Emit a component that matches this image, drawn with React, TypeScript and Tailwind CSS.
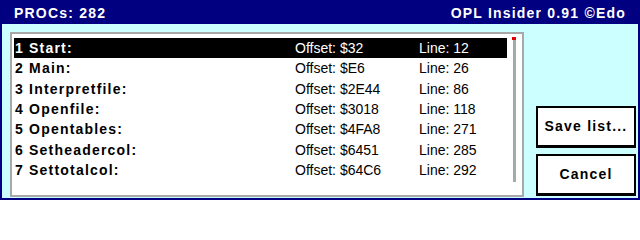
import React from "react";

type Proc = { name: string; offset: string; line: number };

const procs: Proc[] = [
  { name: "1 Start:", offset: "$32", line: 12 },
  { name: "2 Main:", offset: "$E6", line: 26 },
  { name: "3 Interpretfile:", offset: "$2E44", line: 86 },
  { name: "4 Openfile:", offset: "$3018", line: 118 },
  { name: "5 Opentables:", offset: "$4FA8", line: 271 },
  { name: "6 Setheadercol:", offset: "$6451", line: 285 },
  { name: "7 Settotalcol:", offset: "$64C6", line: 292 },
];

function ProcRow({ proc, selected }: { proc: Proc; selected: boolean }) {
  return (
    <div
      className={`grid h-[20.33px] grid-cols-[280px_124px_1fr] items-center pl-px text-[14px] leading-none ${
        selected ? "bg-black text-white" : "text-black"
      }`}
    >
      <span className="font-bold tracking-[1.2px]">{proc.name}</span>
      <span>Offset: {proc.offset}</span>
      <span>Line: {proc.line}</span>
    </div>
  );
}

function DialogButton({ children }: { children: React.ReactNode }) {
  return (
    <button className="flex h-[42px] w-[100px] items-center justify-center border-2 border-b-[3px] border-black bg-white text-[14px] font-bold tracking-[1.2px] text-black">
      {children}
    </button>
  );
}

export default function App() {
  return (
    <div
      className="flex h-[200px] w-[640px] flex-col border-2 border-[#000080] bg-[#ccffff]"
      style={{ fontFamily: '"Liberation Sans", Arial, sans-serif' }}
    >
      <div className="flex h-[22px] shrink-0 items-center justify-between bg-[#000080] pl-[12px] pr-[12px] text-[14px] font-bold tracking-[1.2px] text-white">
        <span>PROCs: 282</span>
        <span>OPL Insider 0.91 ©Edo</span>
      </div>

      <div className="flex flex-1 pl-[8px] pr-[2px] pt-[8px] pb-[1px]">
        <div className="flex w-[514px] border-2 border-[#a8a8a8] bg-white pl-[2px] pr-[6px]">
          <div className="flex w-[493px] flex-col pt-[4px]">
            {procs.map((p, i) => (
              <ProcRow key={p.name} proc={p} selected={i === 0} />
            ))}
          </div>
          <div className="ml-[5px] mt-[3px] flex w-[4px] flex-col items-center">
            <div className="h-[3px] w-[4px] bg-[#e00000]" />
            <div className="h-[142px] w-[3px] bg-[#a8a8a8]" />
          </div>
        </div>

        <div className="ml-[12px] flex flex-col justify-end gap-[6px] pb-px">
          <DialogButton>Save list...</DialogButton>
          <DialogButton>Cancel</DialogButton>
        </div>
      </div>
    </div>
  );
}
